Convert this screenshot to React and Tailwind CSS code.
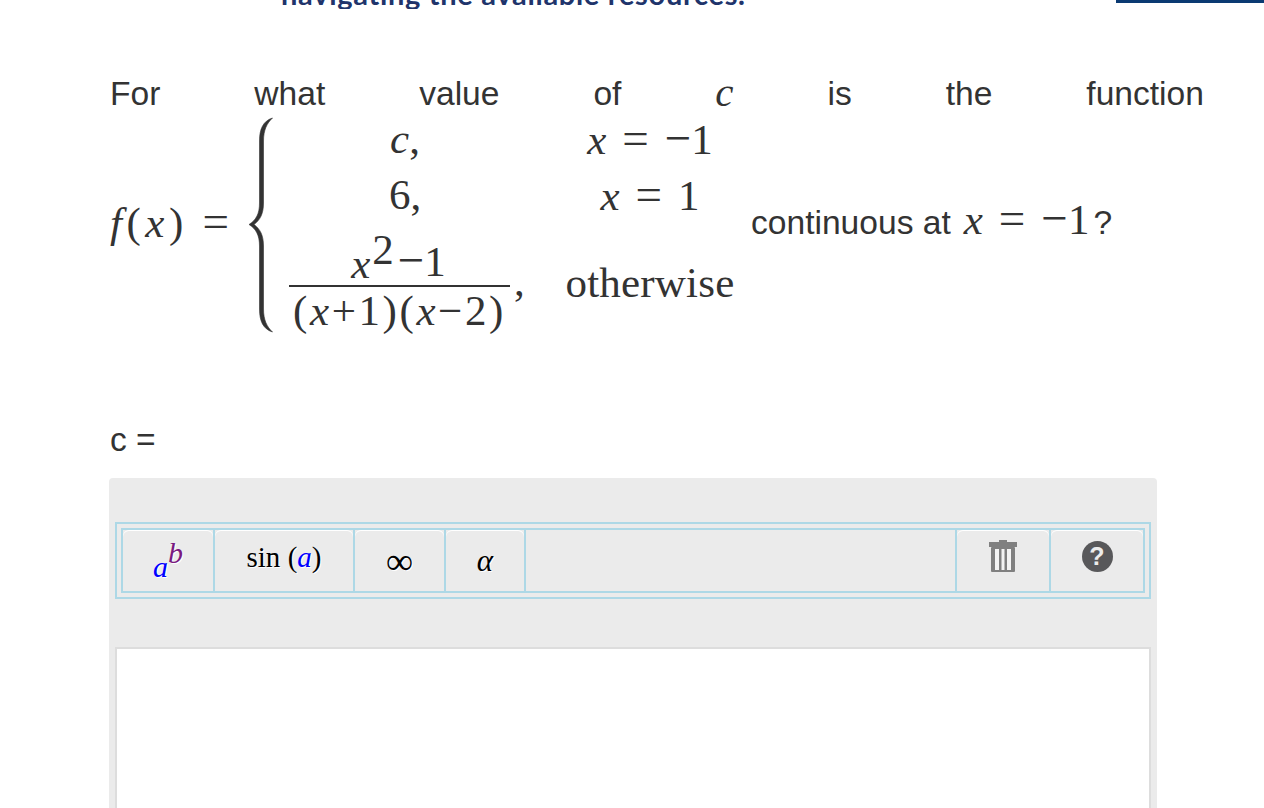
import { Fragment } from 'react';

const sans = "font-['Liberation_Sans',Arial,sans-serif]";
const serif = "font-['Liberation_Serif','Times_New_Roman',serif]";

const words = ['For', 'what', 'value', 'of', 'c', 'is', 'the', 'function'];

function V({ children }) {
  return <span className={`${serif} italic`}>{children}</span>;
}

function Eq({ className = 'mx-[16px]' }) {
  return <span className={`text-[47px] leading-none ${className}`}>=</span>;
}

function Minus() {
  return <span className="text-[47px] leading-none">−</span>;
}

function Brace() {
  return (
    <svg width="27" height="216" viewBox="0 0 27 216" className="shrink-0 text-[#333]">
      <path
        d="M24.5 1 C15 4 11.5 12 11.5 24 L11.5 86 C11.5 97 8 103 1 107.5 C8 112 11.5 118 11.5 129 L11.5 192 C11.5 204 15 212 24.5 215 C19 210 15.5 203 15.5 192 L15.5 129 C15.5 118 12 112 6 107.5 C12 103 15.5 97 15.5 86 L15.5 24 C15.5 13 19 6 24.5 1 Z"
        fill="currentColor"
        stroke="currentColor"
        strokeWidth="0.6"
      />
    </svg>
  );
}

function Cases() {
  return (
    <div className={`${serif} grid grid-cols-[276px_196px] grid-rows-[50px_58px_108px] text-[43px] text-[#333] ml-[1px] leading-none`}>
      <div className="flex items-center justify-center pr-[18px] pb-[8px]">
        <span><V>c</V>,</span>
      </div>
      <div className="flex items-center justify-center pb-[8px]">
        <span className="whitespace-nowrap"><V>x</V><Eq /><Minus />1</span>
      </div>
      <div className="flex items-center justify-center pr-[18px] pb-[4px]">6,</div>
      <div className="flex items-center justify-center pb-[4px]">
        <span className="whitespace-nowrap"><V>x</V><Eq />1</span>
      </div>
      <div className="flex items-center pl-[13px]">
        <div className="flex flex-col items-stretch w-[221px] pt-[12px]">
          <div className="flex items-start justify-center h-[49px] leading-[56px] ml-[-2px]">
            <V>x</V>
            <span className="leading-[36px] mt-[-4px] ml-[2px] mr-[4px]">2</span>
            <span className="leading-[52px] whitespace-nowrap"><Minus />1</span>
          </div>
          <div className="h-[2px] bg-[#333]"></div>
          <div className="text-center h-[48px] leading-[48px] whitespace-nowrap tracking-[2.6px]">
            (<V>x</V>+1)(<V>x</V>−2)
          </div>
        </div>
        <span className="ml-[4px] leading-none mt-[2px]">,</span>
      </div>
      <div className="flex items-center justify-center pt-[6px] tracking-[0.2px]">otherwise</div>
    </div>
  );
}

function ToolCell({ className = '', children, last = false }) {
  return (
    <div className={last ? `h-full ${className}` : `h-full border-r-2 border-[#add8e6] ${className}`}>
      <div className="h-full flex items-center justify-center rounded-t-md shadow-[inset_0_1px_0_#fff]">
        {children}
      </div>
    </div>
  );
}

function Toolbar() {
  return (
    <div className="border-2 border-[#add8e6] p-1 h-[77px]">
      <div className={`${serif} flex border-2 border-[#add8e6] h-[65px] text-black [text-shadow:1px_1px_0_#fff]`}>
        <ToolCell className="w-[92px]">
          <span className="flex items-start text-[30px] italic h-[40px]">
            <span className="text-[#0000ff] mt-[8px] leading-[36px]">a</span>
            <span className="text-[#7a1a80] mt-[-6px] leading-[36px]">b</span>
          </span>
        </ToolCell>
        <ToolCell className="w-[140px] text-[29px]">
          <span className="mb-[6px]">
            sin <span>(</span><span className="italic text-[#0000ff]">a</span><span>)</span>
          </span>
        </ToolCell>
        <ToolCell className="w-[91px] text-[38px]">
          <span className="mt-[2px]">∞</span>
        </ToolCell>
        <ToolCell className="w-[80px] text-[31px] italic">
          <span className="mt-[2px]">α</span>
        </ToolCell>
        <div className="flex-1 border-r-2 border-[#add8e6]"></div>
        <ToolCell className="w-[94px]">
          <svg width="28" height="32" viewBox="0 0 28 32" className="mb-[9px]">
            <path d="M10 0 h8 v2 h10 v5 H0 V2 h10 Z" fill="#808080" />
            <rect x="2" y="7" width="24" height="25" rx="1" fill="#808080" />
            <rect x="6" y="9" width="4" height="21" fill="#f4f4f4" />
            <rect x="12.5" y="9" width="3" height="21" fill="#f4f4f4" />
            <rect x="18" y="9" width="4" height="21" fill="#f4f4f4" />
          </svg>
        </ToolCell>
        <ToolCell className="w-[92px]" last>
          <div className={`${sans} w-[31px] h-[31px] mb-[9px] rounded-full bg-[#58585a] text-[#ececec] font-bold text-[25px] leading-none flex items-center justify-center [text-shadow:none]`}>
            ?
          </div>
        </ToolCell>
      </div>
    </div>
  );
}

export default function App() {
  return (
    <div className={`${sans} h-[808px] overflow-hidden bg-white text-[33.6px] text-[#333]`}>
      <div className="flex justify-between items-start h-[71px]">
        <div className="h-[9px] overflow-hidden ml-[281px]">
          <div className="mt-[-21px] font-['Lato',sans-serif] font-bold text-[29px] leading-[30px] tracking-[0.7px] text-[#20346b] whitespace-nowrap">
            navigating the available resources.
          </div>
        </div>
        <div className="w-[148px] h-[3px] bg-[#0b3a72]"></div>
      </div>

      <div className="pl-[110px] pr-[60px]">
        <div className="flex justify-between h-[46px] items-center leading-none">
          {words.map((w) => (
            <Fragment key={w}>
              {w === 'c' ? <span className={`${serif} italic text-[41px] mb-[4px]`}>c</span> : <span>{w}</span>}
            </Fragment>
          ))}
        </div>

        <div className="flex items-center h-[216px]">
          <div className={`${serif} flex items-baseline justify-between text-[43px] w-[138px] shrink-0 whitespace-nowrap mb-[4px]`}>
            <span className="tracking-[4.5px]"><V>f</V>(<V>x</V>)</span>
            <Eq className="ml-0 mr-[19px]" />
          </div>
          <Brace />
          <Cases />
          <div className="ml-[3px] whitespace-nowrap flex items-baseline leading-none mb-[14px]">
            <span className="mr-[13px]">continuous at</span>
            <span className={`${serif} text-[43px]`}>
              <V>x</V>
              <Eq />
              <Minus />1
            </span>
            <span className="ml-[4px]">?</span>
          </div>
        </div>

        <div className="mt-[87px] h-[40px] leading-[40px] whitespace-nowrap">c =</div>
      </div>

      <div className="ml-[109px] w-[1048px] h-[400px] mt-[18px] bg-[#ebebeb] rounded-t px-[6px] pt-[44px]">
        <Toolbar />
        <div className="mt-[48px] h-[300px] bg-white border-2 border-[#ddd]"></div>
      </div>
    </div>
  );
}
